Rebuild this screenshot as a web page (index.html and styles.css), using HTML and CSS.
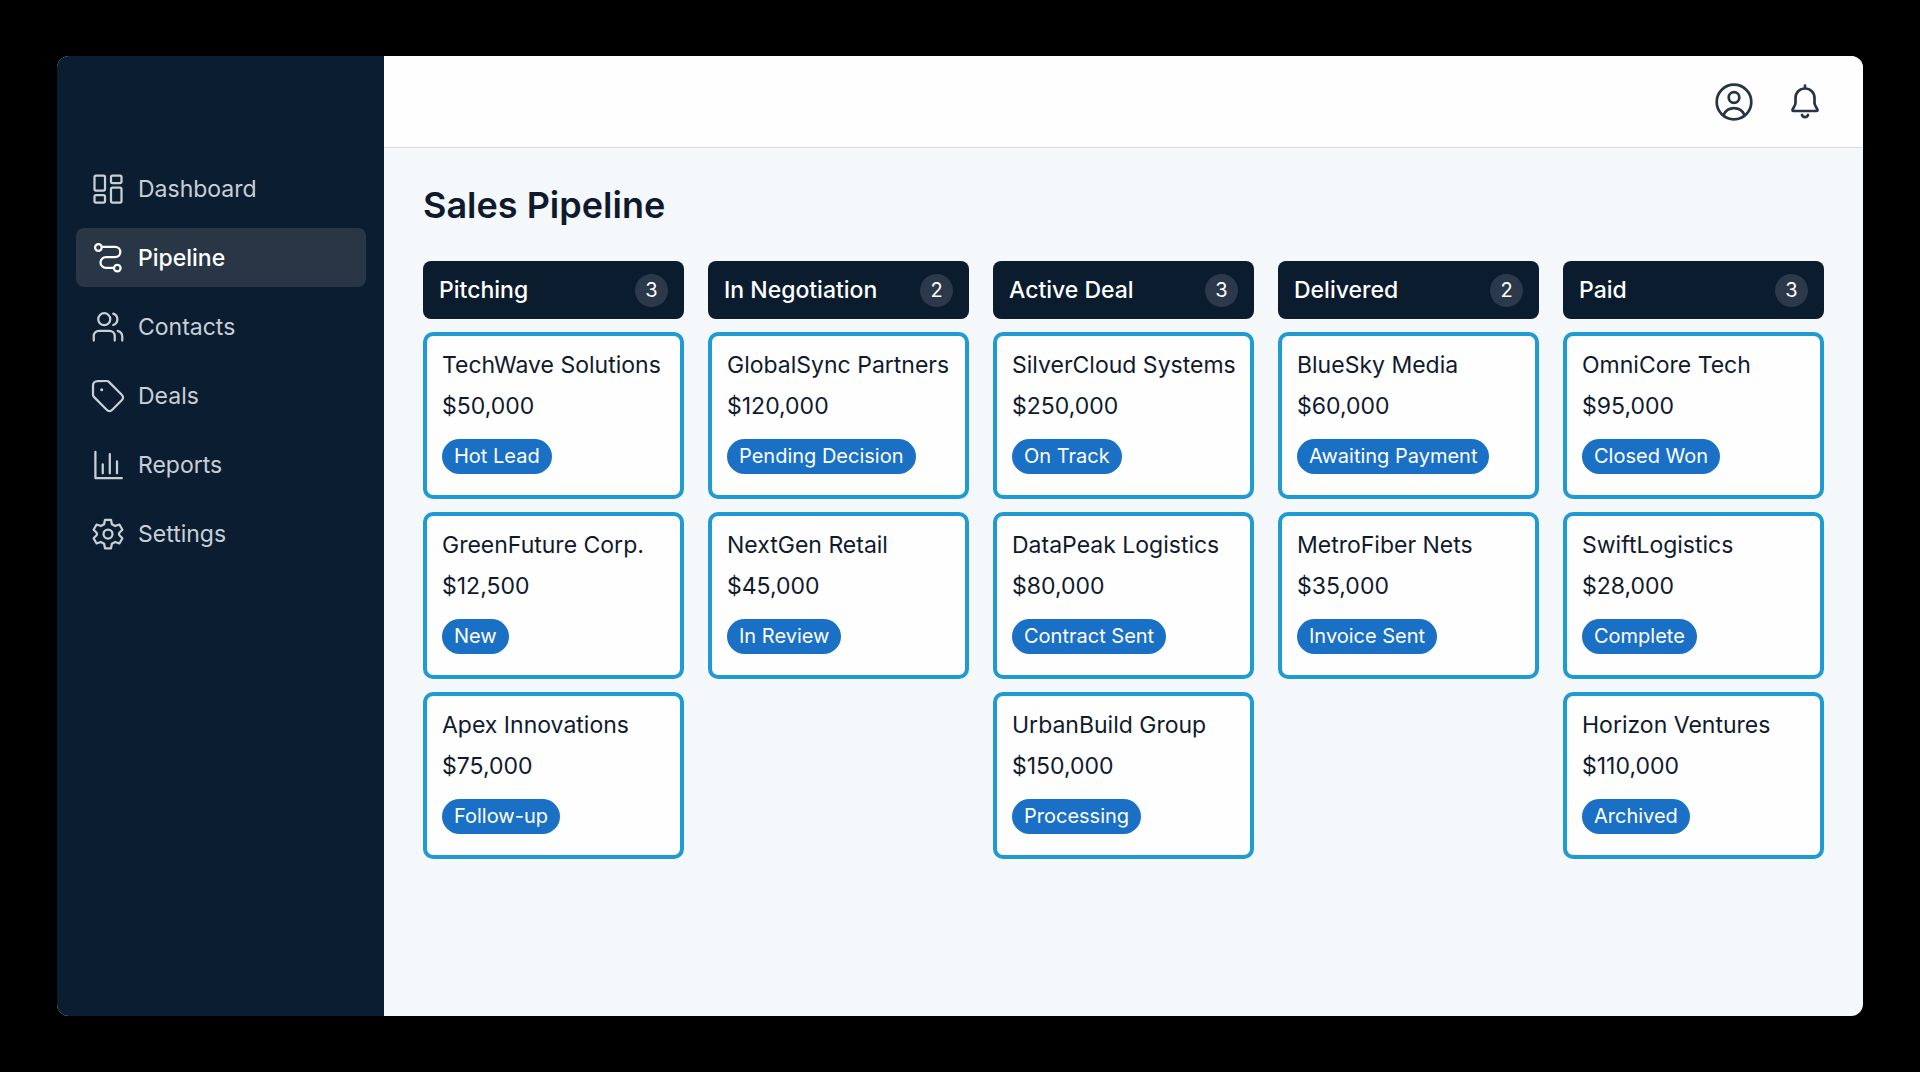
FILE: index.html
```html
<!DOCTYPE html>
<html lang="en">
<head>
    <meta charset="utf-8">
    <meta name="viewport" content="width=device-width, initial-scale=1">
    <title>Sales Pipeline</title>
    <link rel="stylesheet" href="styles.css">
</head>
<body>
    <div class="app">
        <aside class="sidebar">
            <nav class="nav">
                <a class="nav-item" href="#dashboard">
                    <svg class="icon" viewBox="0 0 24 24"><rect x="3" y="3" width="7" height="10" rx="1"/><rect x="14" y="3" width="7" height="5" rx="1"/><rect x="14" y="11" width="7" height="10" rx="1"/><rect x="3" y="16" width="7" height="5" rx="1"/></svg>
                    Dashboard
                </a>
                <a class="nav-item active" href="#pipeline">
                    <svg class="icon" viewBox="0 0 24 24"><circle cx="5.6" cy="5" r="2.2"/><path d="M8 4.6h8.8a3.3 3.3 0 0 1 0 6.8h-6.2a3.6 3.6 0 0 0 0 7.2h5.2"/><circle cx="18.2" cy="18.7" r="2.2"/></svg>
                    Pipeline
                </a>
                <a class="nav-item" href="#contacts">
                    <svg class="icon" viewBox="0 0 24 24"><circle cx="9.5" cy="6.8" r="4"/><path d="M2.5 21v-3a3.5 3.5 0 0 1 3.5-3.5h7a3.5 3.5 0 0 1 3.5 3.5v3M15.5 3.1a4 4 0 0 1 0 7.6M21.5 21v-2.5a4 4 0 0 0-3-3.9"/></svg>
                    Contacts
                </a>
                <a class="nav-item" href="#deals">
                    <svg class="icon" viewBox="0 0 24 24"><path d="M12.6 2.6A2 2 0 0 0 11.2 2H5a3 3 0 0 0-3 3v6.2a2 2 0 0 0 .6 1.4l8.7 8.7a2.4 2.4 0 0 0 3.4 0l6.6-6.6a2.4 2.4 0 0 0 0-3.4z"/><circle class="dot" cx="7.8" cy="7.8" r="1"/></svg>
                    Deals
                </a>
                <a class="nav-item" href="#reports">
                    <svg class="icon" viewBox="0 0 24 24"><path d="M3.6 3.2v17.6h17.6M8.5 11.5v6M13.2 4.8v12.7M18 9.5v8"/></svg>
                    Reports
                </a>
                <a class="nav-item" href="#settings">
                    <svg class="icon" viewBox="0 0 24 24"><path d="M10 2.5h4l.6 3 2.2 1.2 2.8-1 2 3.5-2 2c-.4.5-.4 1.100 0 1.600l2 2-2 3.500-2.800-1-2.200 1.200-.6 3h-4l-.6-3-2.200-1.200-2.800 1-2-3.500 2-2c.4-.5.4-1.100 0-1.600l-2-2 2-3.500 2.800 1 2.200-1.200z"/><circle cx="12" cy="12" r="3"/></svg>
                    Settings
                </a>
            </nav>
        </aside>

        <div class="main">
            <header class="topbar">
                <button class="icon-btn" type="button" aria-label="Account">
                    <svg viewBox="0 0 42 42"><circle cx="21" cy="21" r="17.3"/><circle cx="21" cy="16.5" r="5.3"/><path d="M10.5 34a11.5 11.5 0 0 1 21 0"/></svg>
                </button>
                <button class="icon-btn" type="button" aria-label="Notifications">
                    <svg viewBox="0 0 42 42"><path d="M21 4.5v3M21 7.5c-5.5 0-9.5 4-9.5 9.5v5c0 3-3 5-3 7.2 0 .5.3.8.8.8h23.4c.5 0 .8-.3.8-.8 0-2.2-3-4.2-3-7.2v-5c0-5.5-4-9.500-9.500-9.500zM18 34a3.200 3.200 0 0 0 6 0"/></svg>
                </button>
            </header>

            <main class="content">
                <h1>Sales Pipeline</h1>
                <div class="board">
                    <section class="column">
                        <h2 class="column-head">Pitching <span class="count">3</span></h2>
                        <article class="card">
                            <h3>TechWave Solutions</h3>
                            <p>$50,000</p>
                            <span class="tag">Hot Lead</span>
                        </article>
                        <article class="card">
                            <h3>GreenFuture Corp.</h3>
                            <p>$12,500</p>
                            <span class="tag">New</span>
                        </article>
                        <article class="card">
                            <h3>Apex Innovations</h3>
                            <p>$75,000</p>
                            <span class="tag">Follow-up</span>
                        </article>
                    </section>

                    <section class="column">
                        <h2 class="column-head">In Negotiation <span class="count">2</span></h2>
                        <article class="card">
                            <h3>GlobalSync Partners</h3>
                            <p>$120,000</p>
                            <span class="tag">Pending Decision</span>
                        </article>
                        <article class="card">
                            <h3>NextGen Retail</h3>
                            <p>$45,000</p>
                            <span class="tag">In Review</span>
                        </article>
                    </section>

                    <section class="column">
                        <h2 class="column-head">Active Deal <span class="count">3</span></h2>
                        <article class="card">
                            <h3>SilverCloud Systems</h3>
                            <p>$250,000</p>
                            <span class="tag">On Track</span>
                        </article>
                        <article class="card">
                            <h3>DataPeak Logistics</h3>
                            <p>$80,000</p>
                            <span class="tag">Contract Sent</span>
                        </article>
                        <article class="card">
                            <h3>UrbanBuild Group</h3>
                            <p>$150,000</p>
                            <span class="tag">Processing</span>
                        </article>
                    </section>

                    <section class="column">
                        <h2 class="column-head">Delivered <span class="count">2</span></h2>
                        <article class="card">
                            <h3>BlueSky Media</h3>
                            <p>$60,000</p>
                            <span class="tag">Awaiting Payment</span>
                        </article>
                        <article class="card">
                            <h3>MetroFiber Nets</h3>
                            <p>$35,000</p>
                            <span class="tag">Invoice Sent</span>
                        </article>
                    </section>

                    <section class="column">
                        <h2 class="column-head">Paid <span class="count">3</span></h2>
                        <article class="card">
                            <h3>OmniCore Tech</h3>
                            <p>$95,000</p>
                            <span class="tag">Closed Won</span>
                        </article>
                        <article class="card">
                            <h3>SwiftLogistics</h3>
                            <p>$28,000</p>
                            <span class="tag">Complete</span>
                        </article>
                        <article class="card">
                            <h3>Horizon Ventures</h3>
                            <p>$110,000</p>
                            <span class="tag">Archived</span>
                        </article>
                    </section>
                </div>
            </main>
        </div>
    </div>
</body>
</html>
```

FILE: styles.css
```css
* {
    box-sizing: border-box;
}

body {
    margin: 0;
    min-height: 100vh;
    padding: 56px 57px;
    display: flex;
    background: #000;
    color: #101a2e;
    font-family: Inter, Roboto, sans-serif;
    font-size: 23px;
}

h1, h2, h3, p {
    margin: 0;
}

svg {
    display: block;
    fill: none;
    stroke: currentColor;
    stroke-linecap: round;
    stroke-linejoin: round;
}

.app {
    flex: 1;
    display: flex;
    border-radius: 12px;
    overflow: hidden;
    background: #f5f8fa;
}

/* sidebar */
.sidebar {
    flex: 0 0 327px;
    padding: 103px 18px 24px 19px;
    background: #0b1d31;
}

.nav {
    display: flex;
    flex-direction: column;
    gap: 10px;
}

.nav-item {
    display: flex;
    align-items: center;
    gap: 12px;
    height: 59px;
    padding: 0 14px;
    border-radius: 8px;
    color: #c9cfd6;
    text-decoration: none;
}

.nav-item.active {
    background: #283646;
    color: #fff;
    font-weight: 500;
}

.icon {
    width: 36px;
    height: 36px;
    stroke-width: 1.5;
}

.dot {
    fill: currentColor;
    stroke: none;
}

/* top bar */
.main {
    flex: 1;
    min-width: 0;
}

.topbar {
    display: flex;
    align-items: center;
    justify-content: flex-end;
    gap: 29px;
    height: 92px;
    padding: 0 37px;
    background: #fefefe;
    border-bottom: 1px solid #d9dde1;
}

.icon-btn {
    padding: 0;
    border: 0;
    background: none;
    color: #263445;
    cursor: pointer;
}

.icon-btn svg {
    width: 42px;
    height: 42px;
    stroke-width: 2.7;
}

/* board */
.content {
    padding: 33px 39px;
}

h1 {
    margin-bottom: 31px;
    font-size: 36px;
    line-height: 49px;
    font-weight: 600;
}

.board {
    display: grid;
    grid-template-columns: repeat(5, 1fr);
    gap: 24px;
}

.column {
    display: flex;
    flex-direction: column;
    gap: 13px;
    min-width: 0;
}

.column-head {
    display: flex;
    align-items: center;
    justify-content: space-between;
    height: 58px;
    padding: 0 16px;
    border-radius: 8px;
    background: #0a1c2e;
    color: #fff;
    font-size: 23px;
    font-weight: 500;
}

.count {
    width: 33px;
    border-radius: 50%;
    background: #2b394a;
    font-size: 20px;
    line-height: 33px;
    font-weight: 400;
    text-align: center;
}

.card {
    padding: 9px 15px 21px;
    border: 4px solid #1f9bd1;
    border-radius: 10px;
    background: #fefefe;
    line-height: 41px;
    white-space: nowrap;
}

.card h3 {
    font-size: 23px;
    line-height: 41px;
    font-weight: 400;
}

.tag {
    display: block;
    width: fit-content;
    margin-top: 12px;
    padding: 0 12px;
    border-radius: 18px;
    background: #1a70c5;
    color: #fff;
    font-size: 20px;
    line-height: 35px;
}
```
